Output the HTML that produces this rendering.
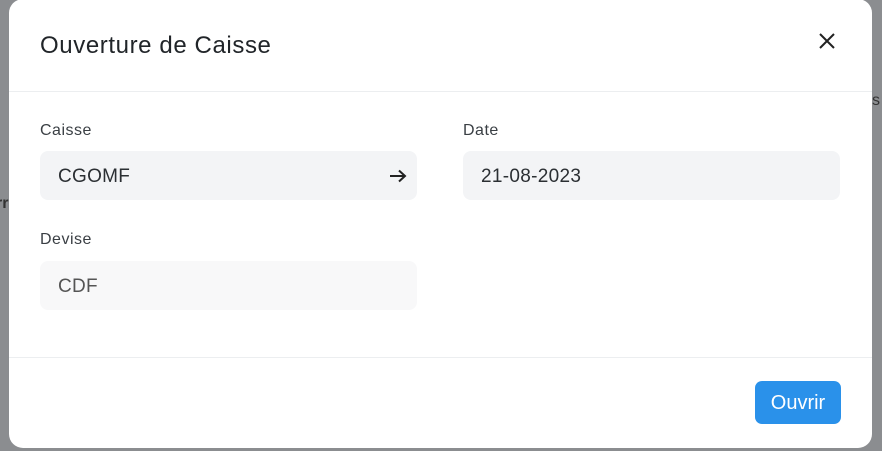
<!DOCTYPE html>
<html><head><style>
body{margin:0;width:882px;height:451px;background:#8b8d90;position:relative;overflow:hidden;font-family:"Liberation Sans",sans-serif}
.bgtxt{position:absolute;color:#333;font-size:16px}
.modal{position:absolute;left:9px;top:-1px;width:863px;height:449px;background:#fff;border-radius:14px;}
.title{position:absolute;left:31px;top:33px;font-size:24px;letter-spacing:0.6px;color:#212529}
.hdiv{position:absolute;left:0;right:0;top:92px;border-top:1px solid #eceef0}
.fdiv{position:absolute;left:0;right:0;top:358px;border-top:1px solid #eceef0}
.lbl{position:absolute;font-size:16px;letter-spacing:0.5px;color:#3a3f44}
.inp{position:absolute;width:377px;height:49px;border-radius:8px;background:#f3f4f6;font-size:19px;letter-spacing:0.3px;color:#2b2f33;line-height:51px;box-sizing:border-box;padding-left:18px}
.btn{position:absolute;left:746px;top:382px;width:86px;height:43px;background:#2a91ea;border-radius:7px;color:#fff;font-size:20px;line-height:44px;text-align:center}
</style></head><body>
<div class="bgtxt" style="left:-4px;top:195px;font-weight:bold">rr</div>
<div class="bgtxt" style="left:872px;top:92px">s</div>
<div class="modal">
<div class="title">Ouverture de Caisse</div>
<svg style="position:absolute;left:810px;top:34px" width="16" height="16" viewBox="0 0 16 16"><path d="M1 1L15 15M15 1L1 15" stroke="#222" stroke-width="2"/></svg>
<div class="hdiv"></div>
<div class="lbl" style="left:31px;top:123px">Caisse</div>
<div class="lbl" style="left:454px;top:123px">Date</div>
<div class="inp" style="left:31px;top:152px">CGOMF<svg style="position:absolute;left:349px;top:18px" width="18" height="14" viewBox="0 0 18 14"><path d="M1 7H16M10 1.5L16 7L10 12.5" stroke="#222" stroke-width="2" fill="none"/></svg></div>
<div class="inp" style="left:454px;top:152px">21-08-2023</div>
<div class="lbl" style="left:31px;top:232px">Devise</div>
<div class="inp" style="left:31px;top:262px;background:#f8f8f9;color:#555">CDF</div>
<div class="fdiv"></div>
<div class="btn">Ouvrir</div>
</div>
</body></html>
